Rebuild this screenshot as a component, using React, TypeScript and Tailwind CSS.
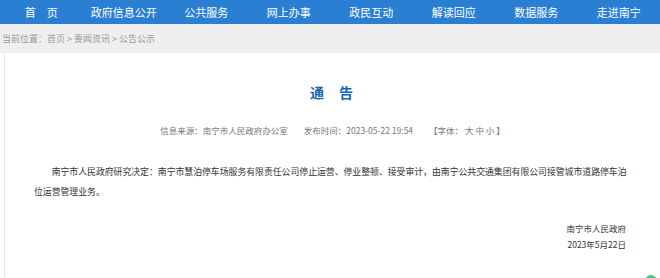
import React from 'react';

const navItems = ['首　页', '政府信息公开', '公共服务', '网上办事', '政民互动', '解读回应', '数据服务', '走进南宁'];

const App: React.FC = () => {
  return (
    <div className="relative w-[660px] h-[278px] overflow-hidden bg-white font-['Noto_Sans_CJK_SC','Noto_Sans',sans-serif]">
      {/* Top navigation */}
      <nav className="grid h-[24px] grid-cols-8 items-center bg-[#2b7fd3] text-[11px] text-white">
        {navItems.map((item) => (
          <div key={item} className="text-center leading-none">
            {item}
          </div>
        ))}
      </nav>

      {/* Breadcrumb */}
      <div className="flex h-[29px] items-center bg-[#efefef] px-[2px] text-[9px] text-[#9a9a9a]">
        当前位置：首页 &gt; 要闻资讯 &gt; 公告公示
      </div>

      {/* Article */}
      <div className="ml-[4px] h-full border-l border-[#e6e6e6] bg-white">
        <h1 className="flex justify-center gap-[15px] pt-[30px] pr-[2px] text-[14px] font-bold leading-[18px] text-[#1565b0]">
          <span>通</span>
          <span>告</span>
        </h1>

        <div className="mt-[22px] flex justify-center gap-[16px] text-[8.5px] leading-[14px] text-[#777]">
          <span>信息来源：南宁市人民政府办公室</span>
          <span>发布时间：2023-05-22 19:54</span>
          <span>【字体： 大 中 小 】</span>
        </div>

        <p className="mt-[25px] ml-[29px] w-[596px] indent-[2em] text-[8.85px] leading-[20px] text-[#333]">
          南宁市人民政府研究决定：南宁市慧泊停车场服务有限责任公司停止运营、停业整顿、接受审计，由南宁公共交通集团有限公司接管城市道路停车泊位运营管理业务。
        </p>

        <div className="mt-[18px] flex flex-col items-end pr-[34px] text-[8.5px] leading-[16px] text-[#333]">
          <span>南宁市人民政府</span>
          <span>2023年5月22日</span>
        </div>
      </div>

      {/* Floating widget peeking at bottom */}
      <div className="absolute right-[3px] top-[275px] h-[12px] w-[12px] rounded-full bg-[#4cc38a]" />
    </div>
  );
};

export default App;
